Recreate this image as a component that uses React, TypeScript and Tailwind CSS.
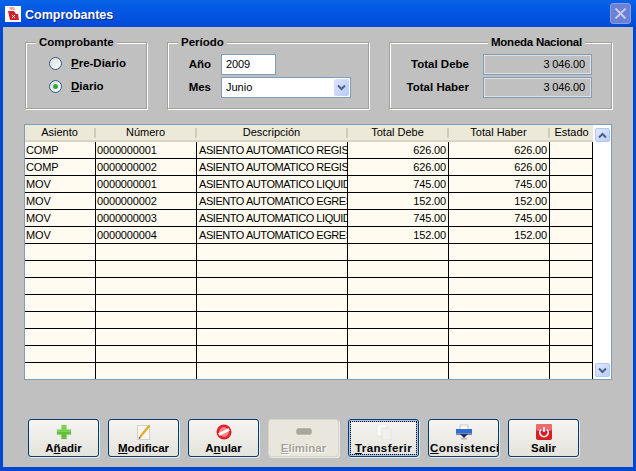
import React from "react";

const rows = [
  ["COMP", "0000000001", "ASIENTO AUTOMATICO REGISTRO", "626.00", "626.00"],
  ["COMP", "0000000002", "ASIENTO AUTOMATICO REGISTRO", "626.00", "626.00"],
  ["MOV", "0000000001", "ASIENTO AUTOMATICO LIQUIDACION", "745.00", "745.00"],
  ["MOV", "0000000002", "ASIENTO AUTOMATICO EGRESO", "152.00", "152.00"],
  ["MOV", "0000000003", "ASIENTO AUTOMATICO LIQUIDACION", "745.00", "745.00"],
  ["MOV", "0000000004", "ASIENTO AUTOMATICO EGRESO", "152.00", "152.00"],
  ...Array.from({ length: 8 }, () => ["", "", "", "", ""]),
];

const headers = ["Asiento", "Número", "Descripción", "Total Debe", "Total Haber", "Estado"];

function Group({ title, legend, w, children }: { title: string; legend: string; w: string; children: React.ReactNode }) {
  return (
    <div className={`relative h-[67px] flex-none border border-[#a3a194] shadow-[inset_1px_1px_0_#fff,1px_1px_0_#fff] ${w}`}>
      <span className={`absolute -top-[8px] h-[14px] whitespace-nowrap bg-[#c0c0c0] px-[3px] text-[11.5px] font-bold leading-[14px] text-black ${legend}`}>{title}</span>
      {children}
    </div>
  );
}

function Radio({ checked, label, rest }: { checked?: boolean; label: string; rest: string }) {
  return (
    <div className="flex h-[23px] items-center">
      <span className="flex h-[13px] w-[13px] flex-none items-center justify-center rounded-full border border-[#2f5f8f] bg-gradient-to-br from-[#dcdcd7] to-white">
        {checked && <span className="h-[5px] w-[5px] rounded-full bg-[#31a83a]" />}
      </span>
      <span className="ml-[9px] whitespace-nowrap text-[11.5px] font-bold text-black">
        <span className="underline">{label}</span>{rest}
      </span>
    </div>
  );
}

function Chevron({ up }: { up?: boolean }) {
  return (
    <svg width="9" height="7" viewBox="0 0 9 7">
      <path d={up ? "M1 5.5 4.5 2 8 5.5" : "M1 1.5 4.5 5 8 1.5"} fill="none" stroke="#4d6185" strokeWidth="2" />
    </svg>
  );
}

function ScrollBtn({ up }: { up?: boolean }) {
  return (
    <div className="flex h-[14px] w-[15px] items-center justify-center rounded-[2px] border border-[#b4c8f5] bg-gradient-to-br from-[#e1eafe] to-[#b9cdf8]">
      <Chevron up={up} />
    </div>
  );
}

const PlusIcon = (
  <svg width="16" height="16" viewBox="0 0 16 16">
    <path d="M5.5 1h5v4.5H15v5h-4.5V15h-5v-4.5H1v-5h4.5z" fill="#7ccf55" stroke="#a0d884" strokeWidth="0.5" />
    <path d="M1 8h14v2.5h-4.5V15h-5v-4.5H1z" fill="#4fa82d" opacity="0.5" />
  </svg>
);
const PencilIcon = (
  <svg width="16" height="16" viewBox="0 0 16 16">
    <rect x="1.5" y="1.5" width="12" height="14" fill="#f7f6f2" stroke="#d4d2c8" />
    <path d="M4 13 13.5 1.5" stroke="#e8a92a" strokeWidth="2.2" />
    <path d="M4 13 3.2 14.6" stroke="#70604a" strokeWidth="1.5" />
  </svg>
);
const BanIcon = (
  <svg width="16" height="16" viewBox="0 0 16 16">
    <circle cx="8" cy="8" r="7.5" fill="#e3202c" />
    <circle cx="8" cy="8" r="4.8" fill="#f28b8b" />
    <path d="M2.8 10.5 13.2 5.5" stroke="#fff" strokeWidth="2.6" />
  </svg>
);
const MinusIcon = (
  <svg width="16" height="16" viewBox="0 0 16 16">
    <rect x="0" y="4" width="16" height="7" rx="2.5" fill="#a9a79a" stroke="#f0efe9" strokeWidth="0.5" />
  </svg>
);
const PagesIcon = (
  <svg width="16" height="16" viewBox="0 0 16 16">
    <path d="M1 0h8l2 2v10H1z" fill="#f8f8f5" stroke="#e6e5de" strokeWidth="0.6" />
    <path d="M6 4h7l2 2v10H6z" fill="#f1f0ec" stroke="#e2e1d9" strokeWidth="0.6" />
  </svg>
);
const PrinterIcon = (
  <svg width="16" height="16" viewBox="0 0 16 16">
    <rect x="4" y="1" width="8" height="5" fill="#f8f8f8" stroke="#9a9a9a" strokeWidth="0.5" />
    <rect x="0" y="5" width="16" height="5" fill="#2f6bd8" />
    <rect x="0" y="9" width="16" height="2" fill="#7d8aa0" />
    <path d="M4 10h8l-4 4z" fill="#1a2f6a" />
    <rect x="5" y="14" width="6" height="1.5" fill="#b8b8b8" />
  </svg>
);
const PowerIcon = (
  <svg width="16" height="16" viewBox="0 0 16 16">
    <rect x="0" y="0" width="16" height="16" rx="2" fill="#d81f26" />
    <rect x="0" y="0" width="16" height="7" rx="2" fill="#ea6a6e" />
    <path d="M5 5.5a4.2 4.2 0 1 0 6 0" fill="none" stroke="#fff" strokeWidth="1.6" />
    <path d="M8 3v5" stroke="#fff" strokeWidth="1.6" />
  </svg>
);

function Btn({ icon, pre = "", u = "", post, disabled, focus, wide }: { icon: React.ReactNode; pre?: string; u?: string; post: string; disabled?: boolean; focus?: boolean; wide?: boolean }) {
  return (
    <div
      className={`flex h-[38px] w-[71px] flex-none flex-col items-center overflow-hidden rounded-[3px] border px-[1px] pt-[4px] ${
        disabled
          ? "border-[#d6d4c8] bg-[#e8e6dd] text-[#a5a397]"
          : "border-[#003c74] bg-gradient-to-b from-[#f6f5f1] to-[#e4e3dc] text-black"
      } ${focus ? "shadow-[1px_1px_0_#e8e8e8,inset_0_0_0_2px_#a9c4ec] outline-1 -outline-offset-3 outline-dotted outline-black" : "shadow-[1px_1px_0_#e8e8e8]"}`}
    >
      <span className="flex h-[16px] flex-none items-center justify-center">{icon}</span>
      <span className={`mt-[1px] w-full whitespace-nowrap text-center text-[11.5px] font-bold leading-[14px] ${wide ? "tracking-[0.4px]" : ""} ${disabled ? "[text-shadow:1px_1px_0_#fff]" : ""}`}>
        {pre}
        {u && <span className="underline">{u}</span>}
        {post}
      </span>
    </div>
  );
}

export default function App() {
  return (
    <div className="flex h-[471px] w-[636px] flex-col overflow-hidden bg-[#0348d0] [font-family:Liberation_Sans,Arimo,sans-serif]">
      <div className="flex h-[27px] flex-none items-center bg-gradient-to-b from-[#0a62e8] via-[#0255e2] to-[#0249d4] pl-[5px] pr-[5px]">
        <svg width="16" height="16" viewBox="0 0 16 16" className="flex-none">
          <rect width="16" height="16" fill="#fff" />
          <path d="M4 1h5l1 3h-5z" fill="#f4a6a6" />
          <path d="M3 5h6l2 3h2l1 6H5z" fill="#d4202a" />
          <path d="M7 9l3 3M10 9l-3 3" stroke="#fff" strokeWidth="1" />
        </svg>
        <span className="ml-[4px] mt-[3px] text-[12.5px] font-bold text-white [text-shadow:1px_1px_0_#0a2a8a]">Comprobantes</span>
        <div className="ml-auto flex h-[21px] w-[21px] items-center justify-center rounded-[3px] border border-[#8d9be0] bg-[#6c80d6]">
          <svg width="13" height="13" viewBox="0 0 13 13">
            <path d="M1.5 1.5 11.5 11.5M11.5 1.5 1.5 11.5" stroke="#c6cdf0" strokeWidth="1.8" />
          </svg>
        </div>
      </div>

      <div className="mx-[3px] mb-[4px] flex flex-1 flex-col bg-[#c0c0c0] pt-[15px]">
        <div className="ml-[22px] flex gap-[20px]">
          <Group title="Comprobante" legend="left-[10px]" w="w-[122px]">
            <div className="px-[23px] pt-[9px]">
              <Radio label="P" rest="re-Diario" />
              <Radio checked label="D" rest="iario" />
            </div>
          </Group>
          <Group title="Período" legend="left-[10px]" w="w-[202px]">
            <div className="flex flex-col gap-[2px] pt-[11px]">
              <div className="flex items-center">
                <span className="w-[43px] text-right text-[11.5px] font-bold text-black">Año</span>
                <div className="ml-[10px] flex h-[21px] w-[55px] items-center border border-[#7f9db9] bg-white pl-[4px] text-[11px] tracking-[-0.15px] text-black">2009</div>
              </div>
              <div className="flex items-center">
                <span className="w-[43px] text-right text-[11.5px] font-bold text-black">Mes</span>
                <div className="ml-[10px] flex h-[21px] w-[130px] items-center justify-between border border-[#7f9db9] bg-white pl-[4px] pr-[1px] text-[11px] text-black">
                  Junio
                  <div className="flex h-[17px] w-[15px] items-center justify-center rounded-[2px] bg-gradient-to-br from-[#dbe5fc] to-[#b7cbf7]">
                    <Chevron />
                  </div>
                </div>
              </div>
            </div>
          </Group>
          <Group title="Moneda Nacional" legend="left-[98px] tracking-[-0.25px]" w="w-[223px]">
            <div className="flex flex-col gap-[2px] pt-[11px]">
              {["Total Debe", "Total Haber"].map((l) => (
                <div key={l} className="flex items-center">
                  <span className="w-[79px] whitespace-nowrap text-right text-[11.5px] font-bold text-black">{l}</span>
                  <div className="ml-[14px] flex h-[21px] w-[109px] items-center justify-end border border-[#7f9db9] bg-[#c0c0c0] pr-[6px] text-[11px] tracking-[-0.15px] text-black shadow-[inset_1px_1px_0_#e0e0e0,inset_-1px_-1px_0_#e0e0e0]">
                    3 046.00
                  </div>
                </div>
              ))}
            </div>
          </Group>
        </div>

        <div className="ml-[21px] mt-[15px] flex h-[256px] w-[588px] flex-none overflow-hidden border border-[#7f9db9] bg-white">
          <div className="w-[568px] flex-none overflow-hidden">
            <div className="grid h-[17px] grid-cols-[71px_101px_151px_101px_101px_43px] bg-[#ece9d8] shadow-[inset_0_-2px_0_#d8d5c4]">
              {headers.map((h, i) => (
                <div key={h} className="flex h-[15px] items-center">
                  <span className="min-w-0 flex-1 text-center text-[11px] leading-[15px] text-black">{h}</span>
                  {i < 5 && <span className="h-[10px] w-[2px] flex-none bg-[#cfccb9]" />}
                </div>
              ))}
            </div>
            {rows.map((r, i) => (
              <div key={i} className="grid h-[17px] grid-cols-[71px_101px_151px_101px_101px_43px] border-b border-black bg-[#fffbf0] text-[11px] leading-[16px] tracking-[-0.15px] text-black">
                {r.map((c, j) => (
                  <div key={j} className={`overflow-hidden whitespace-nowrap border-r border-black ${j >= 3 ? "pr-[2px] text-right" : "pl-[1px]"} ${j === 2 ? "pl-[2px] tracking-[-0.45px]" : ""}`}>
                    {c}
                  </div>
                ))}
                <div className="border-r border-black" />
              </div>
            ))}
          </div>
          <div className="flex flex-1 flex-col items-center justify-between pb-[2px] pt-[3px]">
            <ScrollBtn up />
            <ScrollBtn />
          </div>
        </div>

        <div className="ml-[25px] mt-[39px] flex gap-[9px]">
          <Btn icon={PlusIcon} pre="A" u="ñ" post="adir" />
          <Btn icon={PencilIcon} u="M" post="odificar" />
          <Btn icon={BanIcon} pre="A" u="n" post="ular" />
          <Btn icon={MinusIcon} u="E" post="liminar" disabled />
          <Btn icon={PagesIcon} u="T" post="ransferir" focus wide />
          <Btn icon={PrinterIcon} u="C" post="onsistencia" wide />
          <Btn icon={PowerIcon} post="Salir" />
        </div>
      </div>
    </div>
  );
}
